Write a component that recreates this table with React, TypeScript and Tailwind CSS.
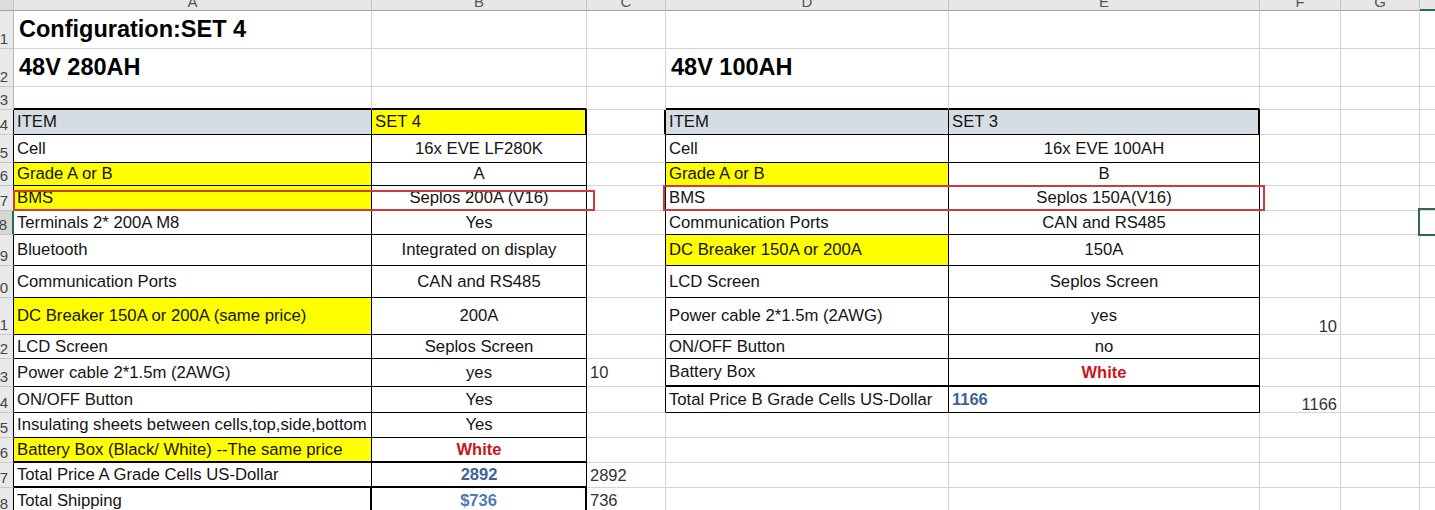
import React from "react";

type Spec = {
  t: string;
  align?: "left" | "center" | "right";
  fill?: "yellow" | "slate";
  tone?: "title" | "red" | "blue" | "blueLight" | "muted";
  bottom?: boolean;
};

const LETTERS = ["", "A", "B", "C", "D", "E", "F", "G", ""];

// sheet content, keyed "row-col" (col 1 = A)
const cells: Record<string, Spec> = {
  "1-1": { t: "Configuration:SET 4", tone: "title" },
  "2-1": { t: "48V 280AH", tone: "title" },
  "2-4": { t: "48V 100AH", tone: "title" },

  "4-1": { t: "ITEM", fill: "slate" },
  "4-2": { t: "SET 4", fill: "yellow" },
  "4-4": { t: "ITEM", fill: "slate" },
  "4-5": { t: "SET 3", fill: "slate" },

  "5-1": { t: "Cell" },
  "5-2": { t: "16x EVE LF280K", align: "center" },
  "5-4": { t: "Cell" },
  "5-5": { t: "16x EVE 100AH", align: "center" },

  "6-1": { t: "Grade A or B", fill: "yellow" },
  "6-2": { t: "A", align: "center" },
  "6-4": { t: "Grade A or B", fill: "yellow" },
  "6-5": { t: "B", align: "center" },

  "7-1": { t: "BMS", fill: "yellow" },
  "7-2": { t: "Seplos 200A (V16)", align: "center" },
  "7-4": { t: "BMS" },
  "7-5": { t: "Seplos 150A(V16)", align: "center" },

  "8-1": { t: "Terminals 2* 200A M8" },
  "8-2": { t: "Yes", align: "center" },
  "8-4": { t: "Communication Ports" },
  "8-5": { t: "CAN and RS485", align: "center" },

  "9-1": { t: "Bluetooth" },
  "9-2": { t: "Integrated on display", align: "center" },
  "9-4": { t: "DC Breaker 150A or 200A", fill: "yellow" },
  "9-5": { t: "150A", align: "center" },

  "10-1": { t: "Communication Ports" },
  "10-2": { t: "CAN and RS485", align: "center" },
  "10-4": { t: "LCD Screen" },
  "10-5": { t: "Seplos Screen", align: "center" },

  "11-1": { t: "DC Breaker 150A or 200A (same price)", fill: "yellow" },
  "11-2": { t: "200A", align: "center" },
  "11-4": { t: "Power cable 2*1.5m (2AWG)" },
  "11-5": { t: "yes", align: "center" },
  "11-6": { t: "10", align: "right", tone: "muted", bottom: true },

  "12-1": { t: "LCD Screen" },
  "12-2": { t: "Seplos Screen", align: "center" },
  "12-4": { t: "ON/OFF Button" },
  "12-5": { t: "no", align: "center" },

  "13-1": { t: "Power cable 2*1.5m (2AWG)" },
  "13-2": { t: "yes", align: "center" },
  "13-3": { t: "10", tone: "muted" },
  "13-4": { t: "Battery Box" },
  "13-5": { t: "White", align: "center", tone: "red" },

  "14-1": { t: "ON/OFF Button" },
  "14-2": { t: "Yes", align: "center" },
  "14-4": { t: "Total Price B Grade Cells US-Dollar" },
  "14-5": { t: "1166", tone: "blue" },
  "14-6": { t: "1166", align: "right", tone: "muted", bottom: true },

  "15-1": { t: "Insulating sheets between cells,top,side,bottom" },
  "15-2": { t: "Yes", align: "center" },

  "16-1": { t: "Battery Box (Black/ White) --The same price", fill: "yellow" },
  "16-2": { t: "White", align: "center", tone: "red" },

  "17-1": { t: "Total Price A Grade Cells US-Dollar" },
  "17-2": { t: "2892", align: "center", tone: "blue" },
  "17-3": { t: "2892", tone: "muted" },

  "18-1": { t: "Total Shipping" },
  "18-2": { t: "$736", align: "center", tone: "blueLight" },
  "18-3": { t: "736", tone: "muted" },
};

const inTable = (r: number, c: number) =>
  (r >= 4 && r <= 18 && (c === 1 || c === 2)) ||
  (r >= 4 && r <= 14 && (c === 4 || c === 5));

function rightBorder(r: number, c: number) {
  if (c === 8) return "";
  const thick =
    (r === 4 && (c === 2 || c === 3 || c === 5)) ||
    (r === 18 && (c === 1 || c === 2));
  if (thick) return "border-r-2 border-r-black";
  if (inTable(r, c) || inTable(r, c + 1)) return "border-r border-r-black";
  return "border-r border-r-[#d4d4d4]";
}

function bottomBorder(r: number, c: number) {
  const thick =
    (r === 3 && [1, 2, 4, 5].includes(c)) ||
    ((r === 16 || r === 17) && (c === 1 || c === 2)) ||
    (r === 13 && (c === 4 || c === 5));
  if (thick) return "border-b-2 border-b-black";
  if (inTable(r, c) || inTable(r + 1, c)) return "border-b border-b-black";
  return "border-b border-b-[#d4d4d4]";
}

function Cell({ r, c }: { r: number; c: number }) {
  const s = cells[`${r}-${c}`];
  const fill =
    s?.fill === "yellow" ? "bg-[#ffff00]" : s?.fill === "slate" ? "bg-[#d6dce4]" : "bg-white";
  const align =
    s?.align === "center"
      ? "justify-center"
      : s?.align === "right"
      ? "justify-end pr-[3px]"
      : s?.tone === "title"
      ? "justify-start pl-[5px]"
      : "justify-start pl-[3px]";
  const tone =
    s?.tone === "title"
      ? "text-[23.5px] font-bold text-black"
      : s?.tone === "red"
      ? "text-[16.5px] font-bold text-[#c8161d]"
      : s?.tone === "blue"
      ? "text-[16.5px] font-bold text-[#3d6391]"
      : s?.tone === "blueLight"
      ? "text-[16.5px] font-bold text-[#4d7cb3]"
      : s?.tone === "muted"
      ? "text-[16.5px] text-[#333333]"
      : "text-[16.7px] text-[#141414]";
  const v = s?.bottom ? "items-end leading-none" : "items-center";

  return (
    <div
      className={`flex min-w-0 overflow-hidden whitespace-nowrap ${fill} ${align} ${tone} ${v} ${rightBorder(r, c)} ${bottomBorder(r, c)}`}
    >
      {s?.t}
    </div>
  );
}

export default function App() {
  const rows = Array.from({ length: 18 }, (_, i) => i + 1);
  const cols = [1, 2, 3, 4, 5, 6, 7, 8];

  return (
    <div className="relative h-[510px] w-[1435px] overflow-hidden bg-white font-['Liberation_Sans',Arial,sans-serif]">
      <div className="grid grid-cols-[14px_358px_215px_79px_283px_311px_81px_79px_1fr] grid-rows-[11px_38px_38px_23px_25px_28px_23px_25px_24px_31px_32px_37px_24px_28px_26px_25px_25px_25px_26px]">
        {/* column letters, only their lower half shows */}
        {LETTERS.map((l, c) => (
          <div
            key={`h${c}`}
            className={`flex items-end justify-center overflow-hidden pb-px text-[15px] leading-none text-[#555555] ${
              c === 0 ? "bg-[#dddddd]" : "bg-[#e7e7e7]"
            } ${
              c === 8
                ? "border-b-2 border-b-[#217346]"
                : "border-b border-b-[#a3a3a3] border-r border-r-[#c4c4c4]"
            }`}
          >
            {l}
          </div>
        ))}

        {rows.map((r) => (
          <React.Fragment key={r}>
            {/* row numbers, clipped on the left */}
            <div
              className={`flex items-end justify-end overflow-hidden pr-[5px] pb-[2px] text-[15px] leading-none text-[#444444] border-b border-b-[#c8c8c8] ${
                r === 8
                  ? "bg-[#d6d6d6] border-r-2 border-r-[#217346]"
                  : r >= 4
                  ? "bg-[#e9e9e9] border-r border-r-black"
                  : "bg-[#e9e9e9] border-r border-r-[#b5b5b5]"
              }`}
            >
              {r}
            </div>
            {cols.map((c) => (
              <Cell key={c} r={r} c={c} />
            ))}
          </React.Fragment>
        ))}
      </div>

      {/* red highlight boxes around the BMS rows */}
      <div className="pointer-events-none absolute left-[13px] top-[190px] h-[21px] w-[582px] border-2 border-[#cf3b3b]" />
      <div className="pointer-events-none absolute left-[663px] top-[185px] h-[26px] w-[602px] border-2 border-[#cf3b3b]" />

      {/* active cell H8 */}
      <div className="pointer-events-none absolute left-[1418px] top-[208px] h-[28px] w-[30px] border-2 border-[#2d6a4c]" />
    </div>
  );
}
